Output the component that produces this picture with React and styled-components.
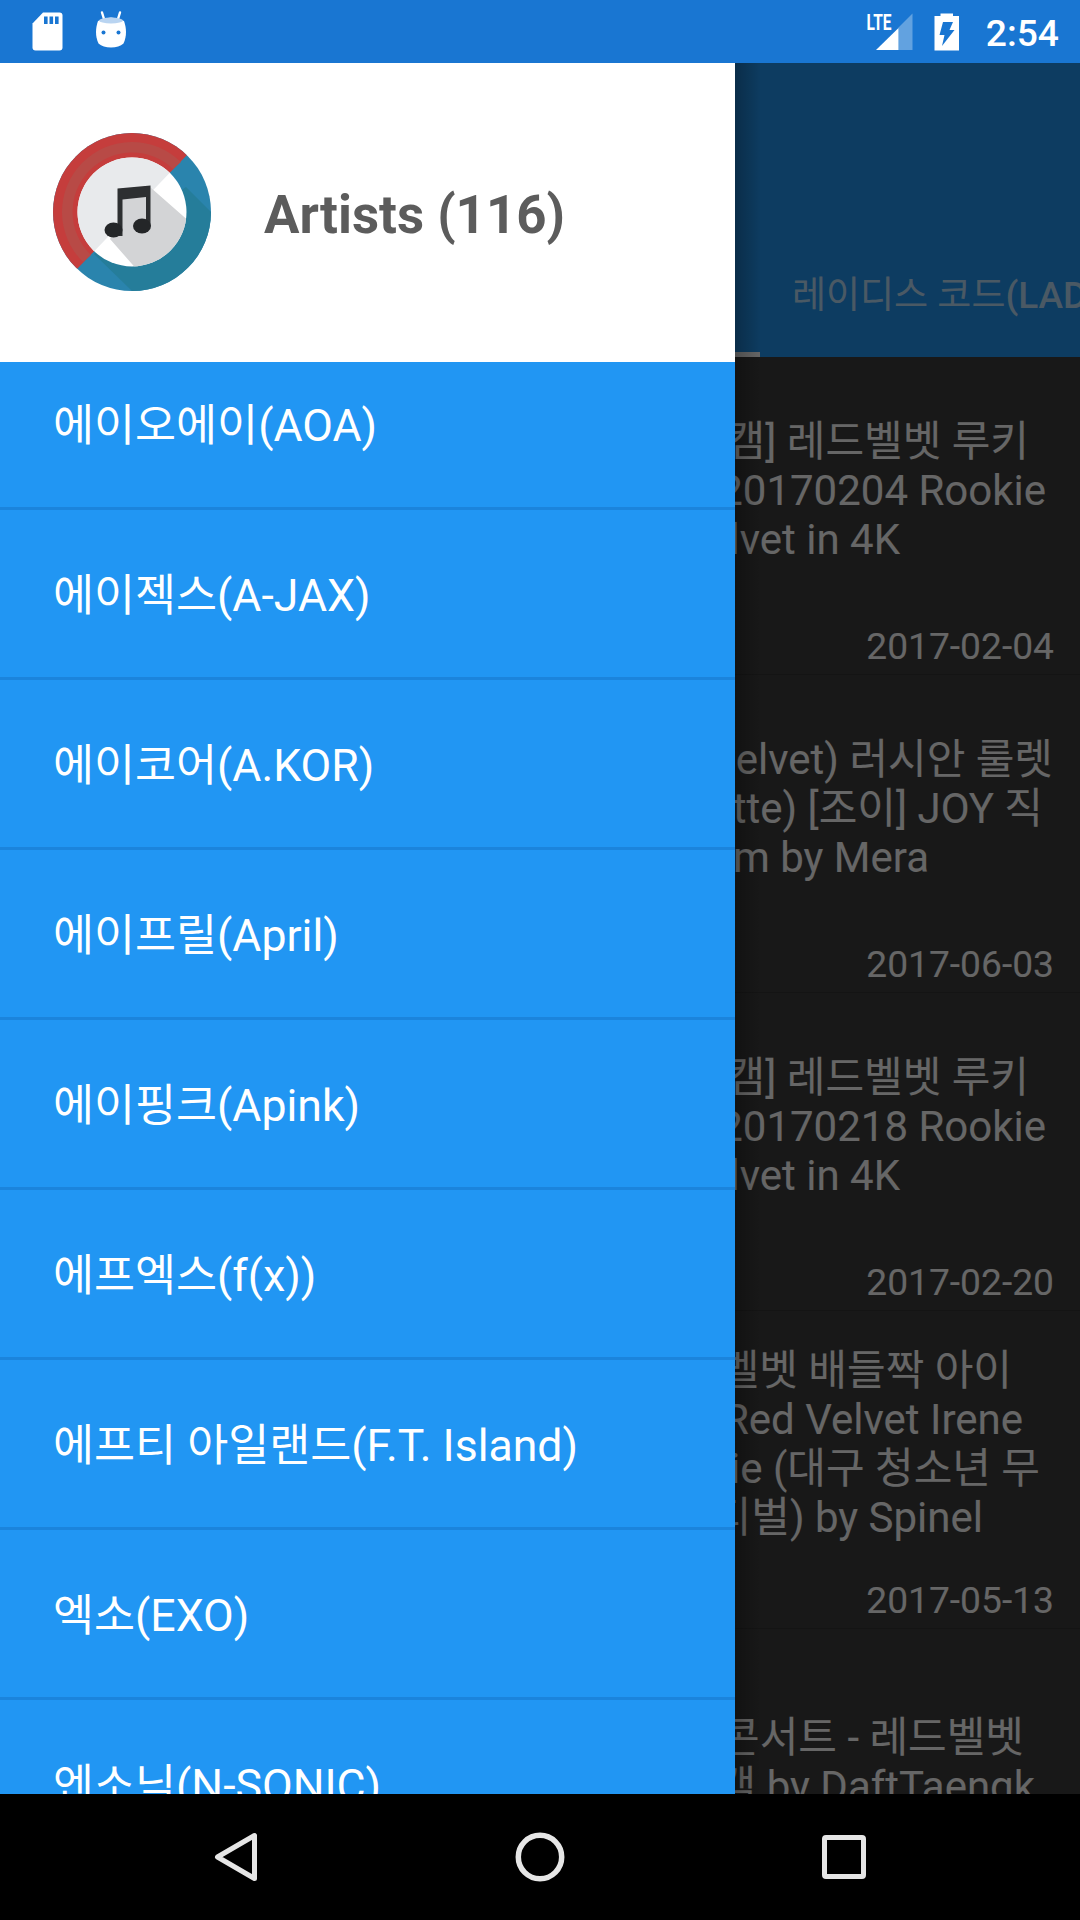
import React from 'react';
import styled, { createGlobalStyle } from 'styled-components';

const GlobalStyle = createGlobalStyle`
  * {
    box-sizing: border-box;
  }

  body {
    margin: 0;
    font-family: Roboto, "Noto Sans CJK KR", sans-serif;
    background-color: #000000;
  }
`;

const Screen = styled.div`
  width: 1080px;
  height: 1920px;
  display: flex;
  flex-direction: column;
  overflow: hidden;
`;

const StatusBar = styled.div`
  height: 63px;
  flex: none;
  display: flex;
  justify-content: space-between;
  padding: 0 21px 0 32px;
  background-color: #1976d2;
`;

const StatusGroup = styled.div`
  display: flex;
  align-items: center;
  gap: ${({ $gap }) => $gap}px;
`;

const Clock = styled.div`
  font-size: 37.2px;
  font-weight: 500;
  line-height: 43px;
  padding-top: 3px;
  margin-left: 5px;
  color: #ffffff;
`;

const Content = styled.div`
  position: relative;
  height: 1731px;
  flex: none;
  overflow: hidden;
  background-color: #3e3e3e;
`;

const AppBar = styled.div`
  height: 294px;
  display: flex;
  flex-direction: column;
  justify-content: flex-end;
  background-color: #2196f3;
`;

const Tabs = styled.div`
  height: 126px;
  display: flex;
  justify-content: flex-end;
`;

const Tab = styled.div`
  flex: none;
  display: flex;
  align-items: center;
  width: ${({ $width }) => $width}px;
  padding: 7px 0 0 32px;
  border-bottom: 5px solid ${({ $active }) => ($active ? '#ffffff' : 'transparent')};
  font-size: 37px;
  line-height: 43px;
  white-space: nowrap;
  overflow: hidden;
  color: rgba(255, 255, 255, 0.7);
`;

const Latin = styled.span`
  font-weight: 500;
`;

const VideoCard = styled.div`
  height: 318px;
  display: flex;
  flex-direction: column;
  border-bottom: 1px solid #333333;
  color: #ffffff;
`;

const VideoTitle = styled.div`
  height: 268px;
  display: flex;
  flex-direction: column;
  justify-content: center;
  padding-bottom: 2px;
`;

const TitleLine = styled.div`
  font-size: 42px;
  line-height: 49px;
  text-align: right;
  white-space: nowrap;
  padding-right: ${({ $end }) => $end}px;
`;

const VideoDate = styled.div`
  font-size: 37.2px;
  line-height: 43px;
  text-align: right;
  padding-right: 26px;
`;

const Scrim = styled.div`
  position: absolute;
  inset: 0;
  background-color: rgba(0, 0, 0, 0.6);
`;

const Drawer = styled.div`
  position: absolute;
  top: 0;
  left: 0;
  width: 735px;
  height: 100%;
  display: flex;
  flex-direction: column;
  background-color: #2196f3;

  &::after {
    content: '';
    position: absolute;
    top: 0;
    left: 100%;
    width: 26px;
    height: 100%;
    background: linear-gradient(to right, rgba(0, 0, 0, 0.25), rgba(0, 0, 0, 0));
  }
`;

const DrawerHeader = styled.div`
  height: 299px;
  flex: none;
  display: flex;
  align-items: center;
  gap: 53px;
  padding: 0 0 2px 53px;
  background-color: #ffffff;
`;

const DrawerTitle = styled.div`
  font-size: 52.8px;
  font-weight: 700;
  line-height: 62px;
  padding-top: 6px;
  color: #5c5c5c;
`;

const ArtistList = styled.div`
  flex: 1;
  overflow: hidden;
`;

const Artist = styled.div`
  height: 170px;
  display: flex;
  align-items: center;
  padding: 5px 0 0 53px;
  border-bottom: 3px solid #1b84dc;
  font-size: 44.6px;
  line-height: 52px;
  white-space: nowrap;
  color: #ffffff;

  /* the list is scrolled a little past its first row */
  &:first-child {
    margin-top: -22px;
  }
`;

const NavBar = styled.div`
  height: 126px;
  flex: none;
  display: flex;
  justify-content: center;
  align-items: center;
  gap: 244px;
  background-color: #000000;
`;

const artists = [
  '에이오에이(AOA)',
  '에이젝스(A-JAX)',
  '에이코어(A.KOR)',
  '에이프릴(April)',
  '에이핑크(Apink)',
  '에프엑스(f(x))',
  '에프티 아일랜드(F.T. Island)',
  '엑소(EXO)',
  '엔소닉(N-SONIC)'
];

const videos = [
  {
    date: '2017-02-04',
    lines: [['캠] 레드벨벳 루키', 51], ['20170204 Rookie', 34], ['lvet in 4K', 180]]
  },
  {
    date: '2017-06-03',
    lines: [['elvet) 러시안 룰렛', 27], ['tte) [조이] JOY 직', 37], ['m by Mera', 151]]
  },
  {
    date: '2017-02-20',
    lines: [['캠] 레드벨벳 루키', 51], ['20170218 Rookie', 34], ['lvet in 4K', 180]]
  },
  {
    date: '2017-05-13',
    lines: [['벨벳 배들짝 아이', 68], ['Red Velvet Irene', 57], ['ie (대구 청소년 무', 40], ['티벌) by Spinel', 97]]
  },
  {
    date: '',
    lines: [['콘서트 - 레드벨벳', 56], ['캠 by DaftTaengk', 45]]
  }
];

const SdCardIcon = () => (
  <svg width="31" height="39" viewBox="0 0 31 39">
    <path d="M11 0.5H27.5Q30.5 0.5 30.5 3.5V35.5Q30.5 38.5 27.5 38.5H3.5Q0.5 38.5 0.5 35.5V11.5Z" fill="#ffffff" />
    <path d="M12 4.5h3.6v7.5h-3.6zM17.5 4.5h3.6v7.5h-3.6zM23 4.5h3.6v7.5h-3.6z" fill="#1976d2" />
  </svg>
);

const DroidIcon = () => (
  <svg width="32" height="42" viewBox="0 0 32 42">
    <path d="M7 1.5L9 8M25 1.5L23 8" stroke="#ffffff" strokeWidth="2.400" strokeLinecap="round" />
    <path d="M3 10Q16 3 29 10C31.500 17 32 25 28.500 32.500Q24 36.500 16 36.500T3.500 32.500C0 25 0.500 17 3 10Z" fill="#ffffff" />
    <ellipse cx="16" cy="9.500" rx="12" ry="3" fill="#b9d4f1" />
    <circle cx="8.500" cy="21.500" r="2" fill="#1976d2" />
    <circle cx="23.500" cy="21.500" r="2" fill="#1976d2" />
  </svg>
);

const SignalIcon = () => (
  <svg width="46" height="38" viewBox="0 0 46 38" overflow="visible">
    <path d="M31.500 14.500L45.500 0.500V37H31.500Z" fill="#ffffff" fillOpacity="0.32" />
    <path d="M9 37L31.500 15V37Z" fill="#ffffff" />
    <text x="-0.500" y="17" fontSize="22.500" fontWeight="700" fill="#ffffff" textLength="25" lengthAdjust="spacingAndGlyphs">LTE</text>
  </svg>
);

const BatteryIcon = () => (
  <svg width="26" height="38" viewBox="0 0 26 38">
    <path d="M6.500 0.500H19V3H25V37.500H0.500V3H6.500Z" fill="#ffffff" />
    <path d="M9 9H19L15.500 17H20.500L8 33L10.500 22H5.500Z" fill="#1976d2" />
  </svg>
);

const Logo = () => (
  <svg width="158" height="158" viewBox="-79 -79 158 158">
    <defs>
      <clipPath id="disc">
        <circle r="79" />
      </clipPath>
      <clipPath id="inner">
        <circle r="54.500" />
      </clipPath>
    </defs>
    <g clipPath="url(#disc)">
      <rect x="-79" y="-79" width="158" height="158" fill="#2a84ad" />
      <path d="M54 -25L79 0V79H0L-38 42Z" fill="#257d9a" />
      <path d="M-54 56L-79 79V-79H79L54 -56Z" fill="#c53d3c" />
      <path d="M-49 50A70 70 0 0 1 49 -50L41 -43A58 58 0 0 0 -41 43Z" fill="#b84a46" />
    </g>
    <circle r="54.500" fill="#ffffff" />
    <g clipPath="url(#inner)">
      <path d="M-54 56L-79 79V-79H79L54 -56Z" fill="#e8eaec" />
      <path d="M18 -25L60 12V60H7L-22 27L-12 10V-18Z" fill="#d3d4d6" />
    </g>
    <path d="M-14.500 -23.500L18.500 -26.500V14H14V-15L-9.500 -12.500V24H-14.500Z" fill="#2d2f31" />
    <ellipse cx="-18.500" cy="18" rx="9" ry="7.500" fill="#242628" />
    <ellipse cx="10" cy="14" rx="9" ry="7.500" fill="#242628" />
  </svg>
);

const BackIcon = () => (
  <svg width="60" height="60" viewBox="0 0 60 60" fill="none" stroke="#e6e6e6" strokeWidth="5">
    <path d="M48.500 8.500V51.500L11.500 30Z" strokeLinejoin="round" />
  </svg>
);

const HomeIcon = () => (
  <svg width="60" height="60" viewBox="0 0 60 60" fill="none" stroke="#e6e6e6" strokeWidth="5.500">
    <circle cx="30" cy="30" r="21.700" />
  </svg>
);

const RecentsIcon = () => (
  <svg width="60" height="60" viewBox="0 0 60 60" fill="none" stroke="#e6e6e6" strokeWidth="5">
    <rect x="10.500" y="10.500" width="39" height="39" rx="1.500" />
  </svg>
);

const Video = ({ video }) => (
  <VideoCard>
    <VideoTitle>
      {video.lines.map(([text, end]) => (
        <TitleLine key={text} $end={end}>{text}</TitleLine>
      ))}
    </VideoTitle>
    <VideoDate>{video.date}</VideoDate>
  </VideoCard>
);

const App = () => (
  <Screen>
    <GlobalStyle />
    <StatusBar>
      <StatusGroup $gap={32}>
        <SdCardIcon />
        <DroidIcon />
      </StatusGroup>
      <StatusGroup $gap={21}>
        <SignalIcon />
        <BatteryIcon />
        <Clock>2:54</Clock>
      </StatusGroup>
    </StatusBar>

    <Content>
      <AppBar>
        <Tabs>
          <Tab $width={760} $active />
          <Tab $width={320}>레이디스 코드<Latin>(LADIES' CODE)</Latin></Tab>
        </Tabs>
      </AppBar>
      {videos.map((video, i) => (
        <Video key={i} video={video} />
      ))}

      <Scrim />

      <Drawer>
        <DrawerHeader>
          <Logo />
          <DrawerTitle>Artists (116)</DrawerTitle>
        </DrawerHeader>
        <ArtistList>
          {artists.map((name) => (
            <Artist key={name}>{name}</Artist>
          ))}
        </ArtistList>
      </Drawer>
    </Content>

    <NavBar>
      <BackIcon />
      <HomeIcon />
      <RecentsIcon />
    </NavBar>
  </Screen>
);

export default App;
